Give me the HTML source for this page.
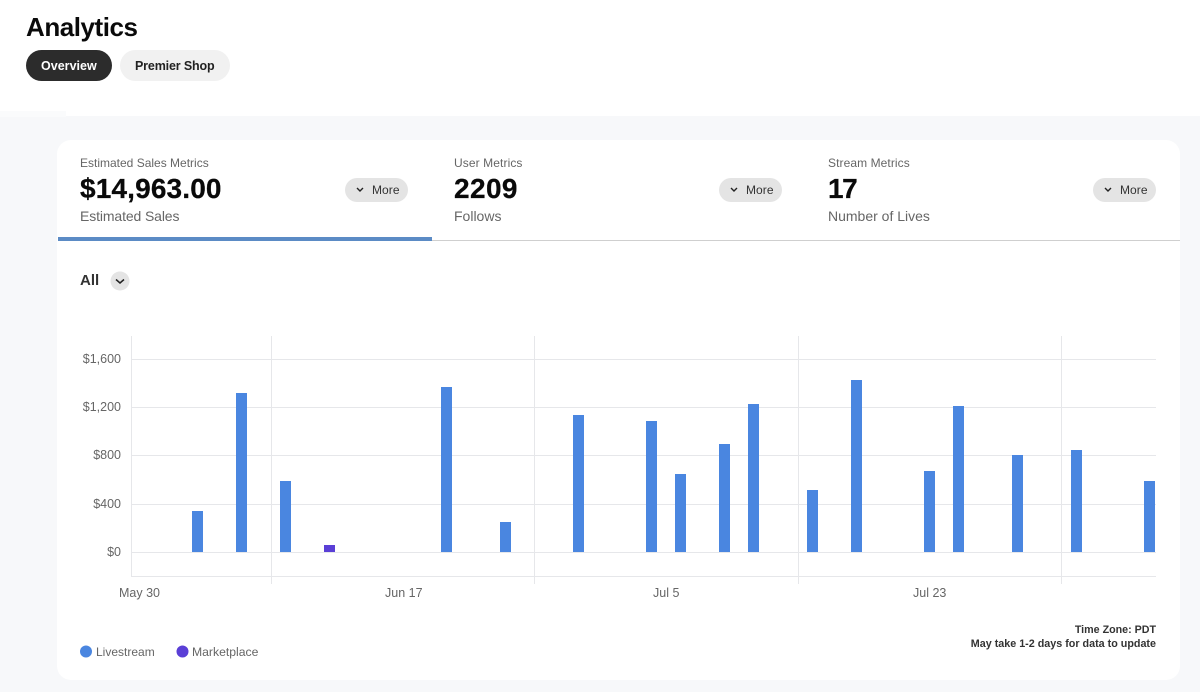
<!DOCTYPE html>
<html><head><meta charset="utf-8"><style>
html,body{margin:0;padding:0}
body{width:1200px;height:692px;position:relative;overflow:hidden;background:#fff;font-family:"Liberation Sans",sans-serif}
.t{position:absolute;white-space:nowrap;line-height:1}
.bg{position:absolute;left:0;top:116px;width:1200px;height:576px;background:#f7f8fa}
.bg2{position:absolute;left:0;top:111px;width:66px;height:6px;background:#fafbfc}
.card{position:absolute;left:57px;top:140px;width:1123px;height:540px;background:#fff;border-radius:14px}
.pill{position:absolute;border-radius:16px;height:31px;top:50px}
.more{position:absolute;top:178px;width:63px;height:24px;border-radius:12px;background:#e4e4e4}
.lab{font-size:12px;color:#666}
.big{font-weight:bold;color:#0a0a0a;font-size:28px;-webkit-text-stroke:.25px #0a0a0a}
.sub{font-size:14px;color:#666}
.m{font-size:12px;color:#333;letter-spacing:.05px}
.ax{font-size:12.5px;color:#666}
svg{position:absolute;left:0;top:0}
</style></head><body>
<div class="bg"></div>
<div class="bg2"></div>
<div class="card"></div>
<div class="t" style="left:26px;top:14px;font-size:26px;font-weight:bold;color:#0a0a0a;letter-spacing:-.45px">Analytics</div>
<div class="pill" style="left:26px;width:86px;background:#2c2c2c"></div>
<div class="pill" style="left:120px;width:110px;background:#f1f1f1"></div>
<div class="t" style="left:41px;top:59.500px;font-size:12.500px;font-weight:bold;color:#fff;letter-spacing:.02px">Overview</div>
<div class="t" style="left:135px;top:59.500px;font-size:12.500px;font-weight:bold;color:#222;letter-spacing:-.15px">Premier Shop</div>

<div class="t lab" style="left:80px;top:157px">Estimated Sales Metrics</div>
<div class="t big" style="left:80px;top:175px;letter-spacing:.15px">$14,963.00</div>
<div class="t sub" style="left:80px;top:209px;letter-spacing:-.12px">Estimated Sales</div>
<div class="t lab" style="left:454px;top:157px;letter-spacing:.1px">User Metrics</div>
<div class="t big" style="left:454px;top:175px;letter-spacing:.4px">2209</div>
<div class="t sub" style="left:454px;top:209px">Follows</div>
<div class="t lab" style="left:828px;top:157px;letter-spacing:.08px">Stream Metrics</div>
<div class="t big" style="left:828px;top:175px;letter-spacing:-1.500px">17</div>
<div class="t sub" style="left:828px;top:209px">Number of Lives</div>

<div class="more" style="left:345px"></div>
<div class="more" style="left:719px"></div>
<div class="more" style="left:1093px"></div>
<div class="t m" style="left:372px;top:184px">More</div>
<div class="t m" style="left:746px;top:184px">More</div>
<div class="t m" style="left:1120px;top:184px">More</div>

<svg width="1200" height="692" viewBox="0 0 1200 692">
<g fill="none" stroke="#222" stroke-width="1.4">
<path d="M357 188l3 3 3-3"/><path d="M731 188l3 3 3-3"/><path d="M1105 188l3 3 3-3"/>
</g>
<rect x="431" y="240" width="749" height="1" fill="#cfcfcf"/>
<rect x="58" y="237" width="374" height="4" fill="#5b8bc5"/>
<circle cx="120" cy="281" r="9.500" fill="#e4e4e4"/>
<path d="M116 279.500l4 3.500 4-3.500" fill="none" stroke="#222" stroke-width="1.500"/>
<g fill="#e6e7ea">
<rect x="131" y="359" width="1025" height="1"/>
<rect x="131" y="407" width="1025" height="1"/>
<rect x="131" y="455" width="1025" height="1"/>
<rect x="131" y="504" width="1025" height="1"/>
<rect x="131" y="552" width="1025" height="1"/>
<rect x="131" y="576" width="1025" height="1"/>
<rect x="131" y="336" width="1" height="240"/>
<rect x="271" y="336" width="1" height="248"/>
<rect x="534" y="336" width="1" height="248"/>
<rect x="798" y="336" width="1" height="248"/>
<rect x="1061" y="336" width="1" height="248"/>
</g>
<g fill="#4a86e0">
<rect x="192" y="511" width="11" height="41"/>
<rect x="236" y="393" width="11" height="159"/>
<rect x="280" y="481" width="11" height="71"/>
<rect x="441" y="387" width="11" height="165"/>
<rect x="500" y="522" width="11" height="30"/>
<rect x="573" y="415" width="11" height="137"/>
<rect x="646" y="421" width="11" height="131"/>
<rect x="675" y="474" width="11" height="78"/>
<rect x="719" y="444" width="11" height="108"/>
<rect x="748" y="404" width="11" height="148"/>
<rect x="807" y="490" width="11" height="62"/>
<rect x="851" y="380" width="11" height="172"/>
<rect x="924" y="471" width="11" height="81"/>
<rect x="953" y="406" width="11" height="146"/>
<rect x="1012" y="455" width="11" height="97"/>
<rect x="1071" y="450" width="11" height="102"/>
<rect x="1144" y="481" width="11" height="71"/>
</g>
<rect x="324" y="545" width="11" height="7" fill="#5a3fd6"/>
<circle cx="86" cy="651.500" r="6" fill="#4a86e0"/>
<circle cx="182.500" cy="651.500" r="6" fill="#5a3fd6"/>
</svg>

<div class="t" style="left:80px;top:273px;font-size:15px;font-weight:bold;color:#333">All</div>

<div class="t ax" style="right:1079px;top:352.500px">$1,600</div>
<div class="t ax" style="right:1079px;top:400.500px">$1,200</div>
<div class="t ax" style="right:1079px;top:449px">$800</div>
<div class="t ax" style="right:1079px;top:497.500px">$400</div>
<div class="t ax" style="right:1079px;top:545.500px">$0</div>

<div class="t ax" style="left:119px;top:586.500px">May 30</div>
<div class="t ax" style="left:385px;top:586.500px">Jun 17</div>
<div class="t ax" style="left:653px;top:586.500px">Jul 5</div>
<div class="t ax" style="left:913px;top:586.500px">Jul 23</div>

<div class="t" style="left:96px;top:645.500px;font-size:12px;color:#666">Livestream</div>
<div class="t" style="left:192px;top:645.500px;font-size:12.200px;color:#666">Marketplace</div>

<div class="t" style="right:44px;top:625px;font-size:10.700px;font-weight:bold;color:#333">Time Zone: PDT</div>
<div class="t" style="right:44px;top:638.500px;font-size:10.750px;font-weight:bold;color:#333">May take 1-2 days for data to update</div>
</body></html>
